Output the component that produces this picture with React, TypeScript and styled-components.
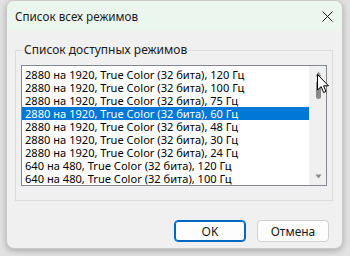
import styled, { createGlobalStyle } from "styled-components";

const modes = [
  "2880 на 1920, True Color (32 бита), 120 Гц",
  "2880 на 1920, True Color (32 бита), 100 Гц",
  "2880 на 1920, True Color (32 бита), 75 Гц",
  "2880 на 1920, True Color (32 бита), 60 Гц",
  "2880 на 1920, True Color (32 бита), 48 Гц",
  "2880 на 1920, True Color (32 бита), 30 Гц",
  "2880 на 1920, True Color (32 бита), 24 Гц",
  "640 на 480, True Color (32 бита), 120 Гц",
  "640 на 480, True Color (32 бита), 100 Гц",
];

const SELECTED = 3;

const GlobalStyle = createGlobalStyle`
  html, body {
    margin: 0;
    padding: 0;
    background: #e2e2e2;
    font-family: "Noto Sans", "Liberation Sans", sans-serif;
  }
`;

const Desktop = styled.div`
  width: 350px;
  height: 256px;
  padding-left: 6px;
  box-sizing: border-box;
  overflow: hidden;
  position: relative;
`;

const Window = styled.div`
  width: 337px;
  height: 249px;
  box-sizing: border-box;
  border: 1px solid #c9c9c9;
  border-radius: 8px;
  background: #f0f0f0;
  overflow: hidden;
  display: flex;
  flex-direction: column;
  box-shadow: 0 2px 6px rgba(0, 0, 0, 0.25);
`;

const TitleBar = styled.div`
  height: 30px;
  flex: none;
  background: #eaf6ee;
  display: flex;
  align-items: center;
  justify-content: space-between;
  padding: 0 9px 0 8px;
`;

const Title = styled.span`
  font-size: 11.7px;
  color: #1a1a1a;
`;

const CloseIcon = styled.svg`
  width: 11px;
  height: 11px;
`;

const Body = styled.div`
  flex: 1;
  display: flex;
  flex-direction: column;
  padding: 12px 9px 0 8px;
`;

const Group = styled.fieldset`
  margin: 0;
  padding: 8px 5px 14px 5px;
  border: 1px solid #dcdcdc;
  border-radius: 0;
`;

const Legend = styled.legend`
  font-size: 12px;
  color: #1a1a1a;
  padding: 0 1px;
  margin-left: 2px;
  line-height: 14px;
`;

const ListBox = styled.div`
  height: 121px;
  box-sizing: border-box;
  border: 1px solid #828790;
  background: #ffffff;
  display: flex;
`;

const Rows = styled.div`
  flex: 1;
  padding-top: 2px;
  display: flex;
  flex-direction: column;
`;

const Row = styled.div<{ $selected?: boolean }>`
  height: 13px;
  line-height: 13px;
  font-size: 11.1px;
  padding-left: 3px;
  white-space: nowrap;
  color: ${(p) => (p.$selected ? "#ffffff" : "#000000")};
  background: ${(p) => (p.$selected ? "#0078d7" : "transparent")};
`;

const ScrollBar = styled.div`
  width: 17px;
  flex: none;
  background: #f0f0f0;
  display: flex;
  flex-direction: column;
  align-items: center;
  justify-content: space-between;
  padding: 5px 0 6px 1px;
  box-sizing: border-box;
`;

const Thumb = styled.div`
  width: 5px;
  height: 18px;
  border-radius: 3px;
  background: #8a8a8a;
  margin-top: 4px;
`;

const Spacer = styled.div`
  flex: 1;
`;

const Footer = styled.div`
  display: flex;
  justify-content: flex-end;
  gap: 11px;
  padding: 19px 4px 0 0;
`;

const Button = styled.button<{ $primary?: boolean }>`
  width: 72px;
  height: 22px;
  box-sizing: border-box;
  border-radius: 4px;
  border: 1px solid ${(p) => (p.$primary ? "#0067c0" : "#d0d0d0")};
  box-shadow: ${(p) => (p.$primary ? "inset 0 0 0 1px #0067c0" : "none")};
  background: #fdfdfd;
  font-family: "Noto Sans", "Liberation Sans", sans-serif;
  font-size: 12px;
  color: #1a1a1a;
  padding: 0;
`;

const Cursor = styled.svg`
  position: absolute;
  left: 317px;
  top: 74px;
  width: 13px;
  height: 20px;
`;

const App = () => {
  return (
    <>
      <GlobalStyle />
      <Desktop>
        <Window>
          <TitleBar>
            <Title>Список всех режимов</Title>
            <CloseIcon viewBox="0 0 11 11">
              <path d="M0.5 0.5 L10.5 10.5 M10.5 0.5 L0.5 10.5" stroke="#1a1a1a" strokeWidth="1" />
            </CloseIcon>
          </TitleBar>
          <Body>
            <Group>
              <Legend>Список доступных режимов</Legend>
              <ListBox>
                <Rows>
                  {modes.map((m, i) => (
                    <Row key={m} $selected={i === SELECTED}>
                      {m}
                    </Row>
                  ))}
                </Rows>
                <ScrollBar>
                  <svg width="7" height="6" viewBox="0 0 7 6">
                    <path d="M3.5 0.5 L6.5 5.5 L0.5 5.5 Z" fill="#8a8a8a" />
                  </svg>
                  <Thumb />
                  <Spacer />
                  <svg width="7" height="5" viewBox="0 0 7 5">
                    <path d="M0.5 0.5 L6.5 0.5 L3.5 4.5 Z" fill="#8a8a8a" />
                  </svg>
                </ScrollBar>
              </ListBox>
            </Group>
            <Footer>
              <Button $primary>OK</Button>
              <Button>Отмена</Button>
            </Footer>
          </Body>
        </Window>
        <Cursor viewBox="0 0 13 20">
          <path
            d="M0.5 0.5 L0.5 16 L4.2 12.6 L6.6 18.5 L9 17.5 L6.6 11.8 L11.5 11.8 Z"
            fill="#ffffff"
            stroke="#000000"
            strokeWidth="1"
            strokeLinejoin="round"
          />
        </Cursor>
      </Desktop>
    </>
  );
};

export default App;
